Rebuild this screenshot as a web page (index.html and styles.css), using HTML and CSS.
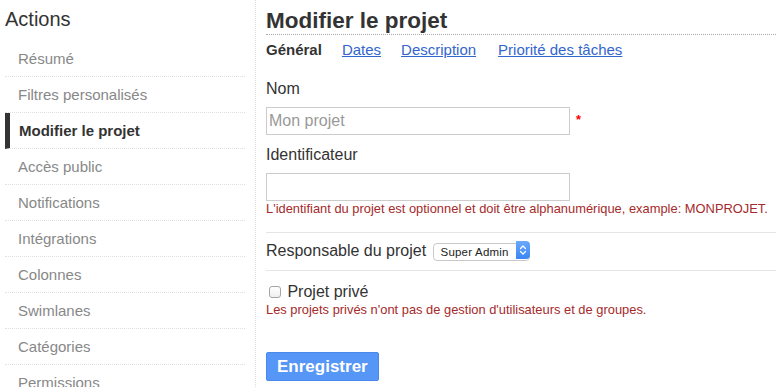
FILE: index.html
```html
<!DOCTYPE html>
<html lang="fr">
<head>
<meta charset="utf-8">
<title>Modifier le projet</title>
<link rel="stylesheet" href="styles.css">
</head>
<body>
<div class="layout">
  <aside class="sidebar">
    <h2 class="sidebar-title">Actions</h2>
    <ul class="menu">
      <li class="menu-item"><a href="#">Résumé</a></li>
      <li class="menu-item"><a href="#">Filtres personalisés</a></li>
      <li class="menu-item active"><a href="#">Modifier le projet</a></li>
      <li class="menu-item"><a href="#">Accès public</a></li>
      <li class="menu-item"><a href="#">Notifications</a></li>
      <li class="menu-item"><a href="#">Intégrations</a></li>
      <li class="menu-item"><a href="#">Colonnes</a></li>
      <li class="menu-item"><a href="#">Swimlanes</a></li>
      <li class="menu-item"><a href="#">Catégories</a></li>
      <li class="menu-item"><a href="#">Permissions</a></li>
    </ul>
  </aside>
  <main class="content">
    <h2 class="page-title">Modifier le projet</h2>
    <ul class="tabs">
      <li class="tab current">Général</li>
      <li class="tab"><a href="#">Dates</a></li>
      <li class="tab"><a href="#">Description</a></li>
      <li class="tab"><a href="#">Priorité des tâches</a></li>
    </ul>
    <form class="form">
      <label class="field-label" for="name">Nom</label>
      <div class="field-row">
        <input class="text-input" id="name" type="text" placeholder="Mon projet">
        <span class="required">*</span>
      </div>
      <label class="field-label second" for="ident">Identificateur</label>
      <div class="field-row">
        <input class="text-input" id="ident" type="text">
      </div>
      <p class="form-help">L'identifiant du projet est optionnel et doit être alphanumérique, example: MONPROJET.</p>
      <hr class="sep first-sep">
      <div class="owner-row">
        <label class="inline-label" for="owner">Responsable du projet</label>
        <span class="select-wrap">
          <select class="select" id="owner"><option>Super Admin</option></select>
          <span class="select-arrow">
            <svg width="14" height="18" viewBox="0 0 14 18"><path d="M4.5 7.5 L7 5 L9.5 7.5 M4.5 10.5 L7 13 L9.5 10.5" fill="none" stroke="#fff" stroke-width="1.3" stroke-linecap="round" stroke-linejoin="round"/></svg>
          </span>
        </span>
      </div>
      <hr class="sep">
      <label class="check-label"><input class="checkbox" type="checkbox"> Projet privé</label>
      <p class="form-help">Les projets privés n'ont pas de gestion d'utilisateurs et de groupes.</p>
      <div class="actions">
        <button class="btn-blue" type="button">Enregistrer</button>
      </div>
    </form>
  </main>
</div>
</body>
</html>
```

FILE: styles.css
```css
* { box-sizing: border-box; }
html, body {
  margin: 0;
  padding: 0;
  background: #fff;
  font-family: "Liberation Sans", Arial, Helvetica, sans-serif;
  color: #333;
  overflow: hidden;
}
.layout {
  display: flex;
  align-items: stretch;
  min-height: 387px;
}
.sidebar {
  width: 256px;
  flex: 0 0 256px;
  padding: 0 10px 0 5px;
  border-right: 1px dotted #ddd;
}
.sidebar-title {
  margin: 0 0 10px 0;
  padding-top: 7px;
  font-size: 20px;
  line-height: 24px;
  font-weight: normal;
  color: #333;
}
.menu {
  list-style: none;
  margin: 0;
  padding: 0;
}
.menu-item {
  line-height: 35px;
  font-size: 15px;
  padding-left: 13px;
  border-bottom: 1px dotted #e0e0e0;
}
.menu-item a {
  color: #888;
  text-decoration: none;
}
.menu-item.active {
  border-left: 5px solid #333;
  padding-left: 9px;
}
.menu-item.active a {
  color: #333;
  font-weight: bold;
}
.content {
  flex: 1;
  padding-left: 10px;
  min-width: 0;
}
.page-title {
  margin: 8px 0 0 0;
  font-size: 22.5px;
  line-height: 26px;
  font-weight: bold;
  color: #333;
  border-bottom: 1px dotted #aaa;
}
.tabs {
  list-style: none;
  margin: 0;
  padding: 6px 0 0 0;
  display: flex;
  gap: 20px;
  font-size: 15px;
  line-height: 18px;
}
.tab a { color: #36c; }
.tab:last-child { margin-left: 2px; }
.tab.current { font-weight: bold; color: #333; }
.form { margin: 0; }
.field-label {
  display: block;
  margin-top: 20px;
  font-size: 16px;
  line-height: 20px;
  color: #333;
}
.field-label.second { margin-top: 10px; }
.field-row {
  display: flex;
  align-items: flex-start;
  margin-top: 8px;
}
.text-input {
  width: 304px;
  height: 28px;
  margin: 0;
  padding: 0 2px;
  border: 1px solid #ccc;
  border-radius: 0;
  font-family: "Liberation Sans", Arial, sans-serif;
  font-size: 16px;
  color: #333;
  background: #fff;
}
.text-input::placeholder { color: #999; }
.required {
  color: red;
  font-weight: bold;
  font-size: 13px;
  padding-left: 6px;
  line-height: 20px;
  padding-top: 3px;
}
.form-help {
  margin: 0;
  font-size: 12.9px;
  line-height: 15px;
  color: brown;
}
.sep {
  margin: 0;
  border: 0;
  border-top: 1px solid #e5e5e5;
  height: 0;
}
.first-sep { margin-top: 16px; }
.owner-row {
  padding-top: 8px;
  height: 37px;
  font-size: 16px;
  line-height: 20px;
}
.inline-label { color: #333; }
.select-wrap {
  position: relative;
  display: inline-block;
  margin-left: 2px;
  vertical-align: baseline;
}
.select {
  -webkit-appearance: none;
  appearance: none;
  width: 97px;
  height: 18px;
  margin: 0;
  padding: 0 0 0 7px;
  border: 1px solid #c8c8c8;
  border-radius: 4px;
  background: #fff;
  font-family: "Liberation Sans", Arial, sans-serif;
  font-size: 11.5px;
  letter-spacing: 0.2px;
  color: #222;
  line-height: 16px;
  vertical-align: baseline;
}
.select-arrow {
  position: absolute;
  top: 0;
  right: 0;
  width: 14px;
  height: 18px;
  background: linear-gradient(#6aa8fb, #3a86f4);
  border-radius: 0 4px 4px 0;
  pointer-events: none;
}
.select-arrow svg { display: block; }
.check-label {
  display: block;
  margin-top: 11px;
  font-size: 16px;
  line-height: 20px;
  color: #333;
}
.checkbox {
  -webkit-appearance: none;
  appearance: none;
  width: 12px;
  height: 12px;
  margin: 0 2px 0 3px;
  border: 1px solid #a5a5a5;
  border-radius: 3px;
  background: linear-gradient(#fff, #f0f0f0);
  vertical-align: -1px;
}
.actions { margin-top: 35px; }
.btn-blue {
  height: 29px;
  padding: 0 10px;
  border: 1px solid #4a89ec;
  border-radius: 2px;
  background: #5596f6;
  color: #fff;
  font-family: "Liberation Sans", Arial, sans-serif;
  font-size: 17px;
  font-weight: bold;
  line-height: 27px;
}
```
